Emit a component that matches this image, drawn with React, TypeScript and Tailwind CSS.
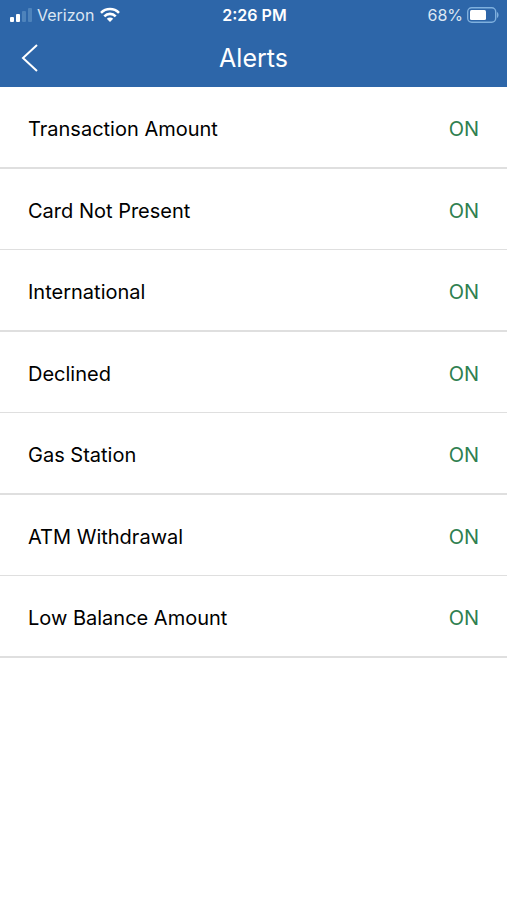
import { useState } from 'react'

type Alert = {
  id: string
  label: string
  enabled: boolean
}

const ALERTS: Alert[] = [
  { id: 'transaction', label: 'Transaction Amount', enabled: true },
  { id: 'card-not-present', label: 'Card Not Present', enabled: true },
  { id: 'international', label: 'International', enabled: true },
  { id: 'declined', label: 'Declined', enabled: true },
  { id: 'gas', label: 'Gas Station', enabled: true },
  { id: 'atm', label: 'ATM Withdrawal', enabled: true },
  { id: 'low-balance', label: 'Low Balance Amount', enabled: true },
]

function SignalIcon() {
  return (
    <svg width="23" height="14" viewBox="0 0 23 14" aria-hidden="true">
      <rect x="0" y="9" width="4" height="5" rx="1" fill="#fff" />
      <rect x="6" y="6" width="4" height="8" rx="1" fill="#fff" />
      <rect x="12" y="3" width="4" height="11" rx="1" fill="#7fb0d8" opacity="0.4" />
      <rect x="18" y="0" width="4" height="14" rx="1" fill="#7fb0d8" opacity="0.4" />
    </svg>
  )
}

function WifiIcon() {
  return (
    <svg width="20" height="15" viewBox="0 0 20 15" aria-hidden="true">
      <g fill="none" stroke="#fff" strokeWidth="2.6">
        <path d="M1 5.8a12.7 12.7 0 0 1 18 0" />
        <path d="M4.3 9.3a8 8 0 0 1 11.4 0" />
      </g>
      <path d="M10 15 6.800 11.800a4.500 4.500 0 0 1 6.400 0Z" fill="#fff" />
    </svg>
  )
}

function BatteryIcon() {
  return (
    <svg width="32" height="16" viewBox="0 0 32 16" aria-hidden="true">
      <rect x="0.7" y="0.7" width="28" height="14.6" rx="4" fill="none" stroke="#7fb0de" strokeWidth="1.4" />
      <rect x="3" y="3" width="16" height="10" rx="1.5" fill="#fff" />
      <path d="M30 5c2 1 2 5 0 6Z" fill="#7fb0de" />
    </svg>
  )
}

export default function App() {
  const [alerts, setAlerts] = useState(ALERTS)

  const toggle = (id: string) => {
    setAlerts(prev => prev.map(a => (a.id === id ? { ...a, enabled: !a.enabled } : a)))
  }

  return (
    <div className="min-h-screen bg-white font-['Inter',sans-serif] text-black">
      <header className="bg-[#2d66a9] text-white">
        <div className="grid h-[29px] grid-cols-3 items-center pr-2 pl-[10px] text-base">
          <div className="flex items-center text-[#dce7f3]">
            <SignalIcon />
            <span className="mr-1.5 ml-1">Verizon</span>
            <WifiIcon />
          </div>
          <span className="text-center font-semibold">2:26 PM</span>
          <div className="flex items-center justify-end gap-1 text-[#dce7f3]">
            <span>68%</span>
            <BatteryIcon />
          </div>
        </div>
        <div className="grid h-[58px] grid-cols-[60px_1fr_60px] items-center">
          <button type="button" aria-label="Back" className="flex h-full items-center pl-[21px]">
            <svg width="18" height="28" viewBox="0 0 18 28" fill="none" stroke="#fff" strokeWidth="2" aria-hidden="true">
              <path d="M16 1 2 14l14 13" />
            </svg>
          </button>
          <h1 className="pt-0.5 text-center text-[25px]">Alerts</h1>
        </div>
      </header>

      <ul>
        {alerts.map(a => (
          <li key={a.id} className="border-b-2 border-[#dfdfdf] even:border-b">
            <button
              type="button"
              aria-pressed={a.enabled}
              onClick={() => toggle(a.id)}
              className="flex h-20 w-full items-center justify-between px-7 pt-1 text-left text-xl"
            >
              <span>{a.label}</span>
              <span className={a.enabled ? 'text-[#2f8050]' : 'text-gray-500'}>{a.enabled ? 'ON' : 'OFF'}</span>
            </button>
          </li>
        ))}
      </ul>
    </div>
  )
}
